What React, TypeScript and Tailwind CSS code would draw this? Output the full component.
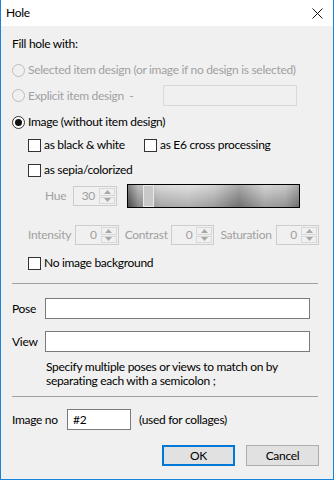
import React from "react";

const font = "font-['Lato','Liberation_Sans',Arial,sans-serif]";

function Radio({ checked, disabled }: { checked?: boolean; disabled?: boolean }) {
  return (
    <span
      className={`flex items-center justify-center w-[13px] h-[13px] rounded-full border shrink-0 ${
        disabled ? "border-[#bcbcbc] bg-[#f0f0f0]" : "border-[#333333] bg-white"
      }`}
    >
      {checked && <span className="w-[7px] h-[7px] rounded-full bg-[#111111]" />}
    </span>
  );
}

function Check() {
  return <span className="w-[13px] h-[13px] border border-[#333333] bg-white shrink-0" />;
}

function Spin({ value, w }: { value: string; w: string }) {
  return (
    <div className={`flex h-[20px] ${w} border border-[#cccccc] bg-[#f0f0f0]`}>
      <div className="flex-1 flex items-center justify-end pr-[4px] text-[#a0a0a0]">{value}</div>
      <div className="w-[17px] flex flex-col gap-px py-px pr-px">
        <div className="flex-1 border border-[#d8d8d8] flex items-center justify-center">
          <svg width="7" height="4" viewBox="0 0 7 4"><path d="M0 4 L3.5 0 L7 4 Z" fill="#a8a8a8" /></svg>
        </div>
        <div className="flex-1 border border-[#d8d8d8] flex items-center justify-center">
          <svg width="7" height="4" viewBox="0 0 7 4"><path d="M0 0 L3.5 4 L7 0 Z" fill="#a8a8a8" /></svg>
        </div>
      </div>
    </div>
  );
}

export default function App() {
  return (
    <div className={`w-[334px] h-[480px] flex flex-col border-x border-b border-[#1883d7] text-[12px] leading-[14px] tracking-[-0.3px] text-black whitespace-nowrap ${font}`}>
      <div className="h-[26px] bg-white flex items-center justify-between pl-[5px] pr-[10px] shrink-0">
        <span className="text-[12px]">Hole</span>
        <svg width="11" height="11" viewBox="0 0 11 11">
          <path d="M0.5 0.5 L10.5 10.5 M10.5 0.5 L0.5 10.5" stroke="#111" strokeWidth="1" />
        </svg>
      </div>
      <div className="flex-1 bg-[#f0f0f0] flex flex-col pl-[11px] pr-[14px]">
        <div className="mt-[9px] h-[18px] flex items-center">Fill hole with:</div>

        <div className="mt-[7px] h-[20px] flex items-center gap-[3px] text-[#a0a0a0]">
          <Radio disabled />
          <span>Selected item design (or image if no design is selected)</span>
        </div>

        <div className="mt-[5px] h-[21px] flex items-center text-[#a0a0a0]">
          <div className="flex items-center gap-[3px] w-[151px]">
            <Radio disabled />
            <span>Explicit item design&nbsp;&nbsp;-</span>
          </div>
          <div className="w-[134px] h-[21px] border border-[#d9d9d9] bg-[#f0f0f0]" />
        </div>

        <div className="mt-[6px] h-[20px] flex items-center gap-[3px]">
          <Radio checked />
          <span>Image (without item design)</span>
        </div>

        <div className="mt-[3px] h-[20px] flex items-center pl-[16px]">
          <div className="flex items-center gap-[3px] w-[116px]">
            <Check />
            <span>as black &amp; white</span>
          </div>
          <div className="flex items-center gap-[3px]">
            <Check />
            <span>as E6 cross processing</span>
          </div>
        </div>

        <div className="mt-[5px] h-[20px] flex items-center gap-[3px] pl-[16px]">
          <Check />
          <span>as sepia/colorized</span>
        </div>

        <div className="mt-[4px] h-[24px] flex items-center pl-[33px]">
          <span className="w-[28px] text-[#a0a0a0]">Hue</span>
          <Spin value="30" w="w-[44px]" />
          <div className="ml-[10px] w-[173px] h-[24px] border border-black flex bg-[linear-gradient(to_right,#5a5a5a_0%,#a8a8a8_6%,#cfcfcf_20%,#d8d8d8_35%,#c4c4c4_50%,#8c8c8c_65%,#c6c6c6_80%,#b8b8b8_92%,#8a8a8a_100%)]">
            <div className="w-full h-full flex bg-[linear-gradient(to_bottom,rgba(255,255,255,0.25),rgba(0,0,0,0.2))]">
              <div className="ml-[15px] w-[11px] h-full border border-[#e8e8e8] bg-[#c8c8c8]" />
            </div>
          </div>
        </div>

        <div className="mt-[17px] h-[20px] flex items-center pl-[16px] text-[#a0a0a0]">
          <span className="w-[48px]">Intensity</span>
          <Spin value="0" w="w-[44px]" />
          <span className="ml-[6px] w-[47px]">Contrast</span>
          <Spin value="0" w="w-[44px]" />
          <span className="ml-[6px] w-[56px]">Saturation</span>
          <Spin value="0" w="w-[44px]" />
        </div>

        <div className="mt-[8px] h-[20px] flex items-center gap-[3px] pl-[16px]">
          <Check />
          <span>No image background</span>
        </div>

        <div className="mt-[10px] h-px bg-[#a0a0a0] w-[306px]" />

        <div className="mt-[14px] h-[21px] flex items-center">
          <span className="w-[33px]">Pose</span>
          <div className="w-[265px] h-[21px] border border-[#7a7a7a] bg-white" />
        </div>

        <div className="mt-[12px] h-[21px] flex items-center">
          <span className="w-[33px]">View</span>
          <div className="w-[265px] h-[21px] border border-[#7a7a7a] bg-white" />
        </div>

        <p className="mt-[8px] pl-[34px] leading-[14px]">
          Specify multiple poses or views to match on by
          <br />
          separating each with a semicolon ;
        </p>

        <div className="mt-[8px] h-px bg-[#a0a0a0] w-[306px]" />

        <div className="mt-[12px] h-[21px] flex items-center">
          <span className="w-[55px]">Image no</span>
          <div className="w-[64px] h-[21px] border border-[#7a7a7a] bg-white flex items-center pl-[5px]">#2</div>
          <span className="ml-[8px]">(used for collages)</span>
        </div>

        <div className="mt-[15px] h-[21px] flex justify-end gap-[11px] pr-[0px]">
          <button className="w-[73px] h-[21px] border-2 border-[#0078d7] bg-[#e1e1e1] flex items-center justify-center">OK</button>
          <button className="w-[73px] h-[21px] border border-[#adadad] bg-[#e1e1e1] flex items-center justify-center">Cancel</button>
        </div>
      </div>
    </div>
  );
}
